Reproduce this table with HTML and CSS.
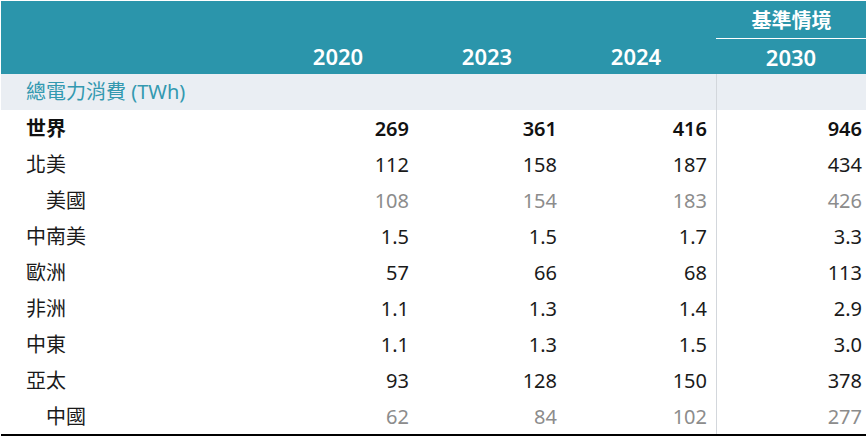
FILE: index.html
```html
<!DOCTYPE html>
<html lang="zh-Hant">
<head>
<meta charset="utf-8">
<title>總電力消費</title>
<link rel="stylesheet" href="styles.css">
</head>
<body>
<div class="wrap">
<table class="data">
  <colgroup>
    <col class="c-label"><col class="c-num"><col class="c-num2"><col class="c-num"><col class="c-gap"><col class="c-num">
  </colgroup>
  <thead>
    <tr class="h1">
      <th></th><th></th><th></th><th></th><th></th>
      <th class="scen">基準情境</th>
    </tr>
    <tr class="h2">
      <th></th><th>2020</th><th>2023</th><th>2024</th><th></th><th class="sep">2030</th>
    </tr>
  </thead>
  <tbody>
    <tr class="sub">
      <td class="lbl">總電力消費 (TWh)</td><td></td><td></td><td></td><td></td><td class="sep"></td>
    </tr>
    <tr class="bold">
      <td class="lbl">世界</td><td>269</td><td>361</td><td>416</td><td></td><td class="sep">946</td>
    </tr>
    <tr>
      <td class="lbl">北美</td><td>112</td><td>158</td><td>187</td><td></td><td class="sep">434</td>
    </tr>
    <tr class="minor">
      <td class="lbl ind">美國</td><td>108</td><td>154</td><td>183</td><td></td><td class="sep">426</td>
    </tr>
    <tr>
      <td class="lbl">中南美</td><td>1.5</td><td>1.5</td><td>1.7</td><td></td><td class="sep">3.3</td>
    </tr>
    <tr>
      <td class="lbl">歐洲</td><td>57</td><td>66</td><td>68</td><td></td><td class="sep">113</td>
    </tr>
    <tr>
      <td class="lbl">非洲</td><td>1.1</td><td>1.3</td><td>1.4</td><td></td><td class="sep">2.9</td>
    </tr>
    <tr>
      <td class="lbl">中東</td><td>1.1</td><td>1.3</td><td>1.5</td><td></td><td class="sep">3.0</td>
    </tr>
    <tr>
      <td class="lbl">亞太</td><td>93</td><td>128</td><td>150</td><td></td><td class="sep">378</td>
    </tr>
    <tr class="minor last">
      <td class="lbl ind">中國</td><td>62</td><td>84</td><td>102</td><td></td><td class="sep">277</td>
    </tr>
  </tbody>
</table>
</div>
</body>
</html>
```
FILE: styles.css
```css
html, body {
  margin: 0;
  padding: 0;
  background: #ffffff;
}
body {
  font-family: "Noto Sans", "Noto Sans CJK TC", sans-serif;
  color: #1a1a1a;
}
.wrap {
  padding: 1px 0 0 1px;
}
.data {
  border-collapse: collapse;
  table-layout: fixed;
  width: 865px;
}
.c-label { width: 262px; }
.c-num { width: 150px; }
.c-num2 { width: 148px; }
.c-gap { width: 5px; }
.data th, .data td {
  padding: 0 4px 0 0;
  white-space: nowrap;
}
.data thead th {
  background: #2b95ab;
  color: #ffffff;
  font-weight: 600;
  text-align: center;
  padding: 0;
}
.h1 th {
  height: 37px;
  font-size: 20px;
  vertical-align: middle;
}
.h1 .scen {
  border-bottom: 1px solid #ffffff;
  padding-left: 1px;
}
.h2 th {
  height: 35px;
  font-size: 22px;
  font-weight: 500;
  vertical-align: middle;
  padding-top: 2px;
}
.data tbody td {
  height: 34px;
  font-size: 20px;
  text-align: right;
  vertical-align: middle;
  line-height: 1;
  padding-top: 2px;
}
.data .sep {
  border-left: 1px solid #d3d7dc;
}
.data thead .sep {
  border-left: none;
}
.sub td {
  background: #eaeef3;
}
.data .sub td {
  padding-top: 0;
  height: 36px;
}
.sub .lbl {
  color: #3399b0;
  font-size: 20px;
}
.data .lbl {
  text-align: left;
  padding-left: 25px;
}
.data .ind {
  padding-left: 45px;
}
.bold td {
  font-weight: 600;
  color: #111111;
}
.minor td {
  color: #8c8c8c;
}
.minor .lbl {
  color: #1a1a1a;
}
.last td {
  border-bottom: 2px solid #000000;
}
```
